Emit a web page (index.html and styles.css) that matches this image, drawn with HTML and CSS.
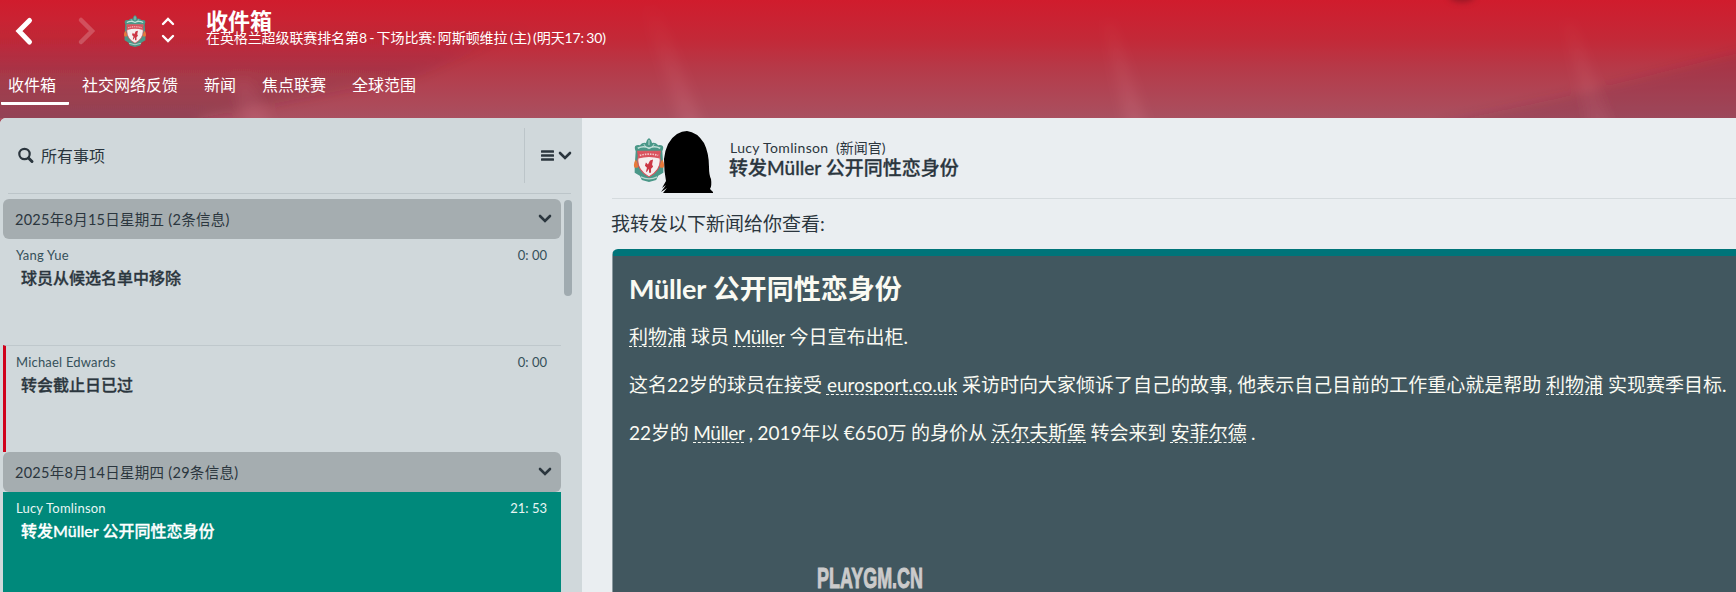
FILE: index.html
```html
<!DOCTYPE html>
<html lang="zh-CN">
<head>
    <meta charset="UTF-8">
    <meta name="viewport" content="width=device-width, initial-scale=1.0">
    <title>收件箱</title>
    <link rel="stylesheet" href="styles.css">
</head>
<body>
    <!-- Shared icons -->
    <svg class="sprite" width="0" height="0">
        <symbol id="crest" viewBox="0 0 30 43">
            <path d="M1 27 L2 13 Q-1 6 6 7 Q9 4 12 5 Q12 2 15 0 Q18 2 18 5 Q21 4 24 7 Q31 6 28 13 L29 27 L29 34 L24 37 L22 41 L15 43 L8 41 L6 37 L1 34 Z" fill="#4a9788"/>
            <path d="M4 10 Q10 7 15 10 Q20 7 26 10" fill="none" stroke="#c3e0d9" stroke-width="1.5"/>
            <path d="M15 2 V7 M10 6 L12 9 M20 6 L18 9" stroke="#d5eae5" stroke-width="0.8"/>
            <path d="M7 38 Q15 42 23 38" fill="none" stroke="#b9dad2" stroke-width="1.2"/>
            <path d="M1 29 Q-1 26 2 21 Q5 25 4 29 Z M29 29 Q31 26 28 21 Q25 25 26 29 Z" fill="#e8793a"/>
            <path d="M4 13 H26 Q25 17 26 22 Q26 32 15 38 Q4 32 4 22 Q5 17 4 13 Z" fill="#f5eeee" stroke="#d8505a" stroke-width="1"/>
            <path d="M4 13 H26 L25.500 20 Q15 17 4.500 20 Z" fill="#d9535e"/>
            <path d="M6 17 Q15 14.500 24 17" fill="none" stroke="#f3c5c8" stroke-width="1.600" stroke-dasharray="1.500 1"/>
            <path d="M12 24 L14 26 L16 22 L19 21 L18 26 L19 28 L17 30 L17 34 L15 34 L15 30 L13 33 L12 33 L13 29 L11 27 Z" fill="#cc3644"/>
        </symbol>
        <symbol id="chevron" viewBox="0 0 14 10">
            <path d="M2 2 L7 7 L12 2" fill="none" stroke="currentColor" stroke-width="2.600" stroke-linecap="round"/>
        </symbol>
    </svg>

    <header class="top-bar">
        <svg class="scenery" viewBox="0 0 1736 118" preserveAspectRatio="none">
            <defs>
                <filter id="soft"><feGaussianBlur stdDeviation="6"/></filter>
                <linearGradient id="ray" x1="0" y1="0" x2="0" y2="1">
                    <stop offset="0" stop-color="#ff9fb0" stop-opacity="0"/>
                    <stop offset="1" stop-color="#ff9fb0" stop-opacity="0.140"/>
                </linearGradient>
                <linearGradient id="shade" x1="0" y1="0" x2="0" y2="1">
                    <stop offset="0.200" stop-color="#5a2038" stop-opacity="0"/>
                    <stop offset="1" stop-color="#5a2038" stop-opacity="0.320"/>
                </linearGradient>
            </defs>
            <g filter="url(#soft)">
                <path d="M-20 0 H600 L420 75 L200 118 V130 H-20 Z" fill="url(#shade)"/>
                <path d="M640 0 L656 0 L706 134 L684 134 Z M1102 20 H1114 L1150 134 H1128 Z M1562 20 H1574 L1614 134 H1592 Z M232 80 L250 80 L276 134 H248 Z" fill="url(#ray)"/>
                <path d="M1440 124 L1560 98 L1750 50 V134 H1440 Z" fill="#6a2745" fill-opacity="0.200"/>
            </g>
            <ellipse class="spot" cx="1462" cy="-5" rx="13" ry="7"/>
        </svg>
        <div class="title-row">
            <svg class="nav-arrow" width="20" height="30" viewBox="0 0 20 30"><path d="M15.500 4.500 L5 15 L15.500 26" fill="none" stroke="#fff" stroke-width="5" stroke-linecap="round"/></svg>
            <svg class="nav-arrow forward" width="20" height="30" viewBox="0 0 20 30"><path d="M4 4 L15 15 L4 26" fill="none" stroke="#fff" stroke-width="4.500" stroke-linecap="round"/></svg>
            <svg class="club" width="24" height="32" preserveAspectRatio="none"><use href="#crest"/></svg>
            <svg class="switcher" width="16" height="28" viewBox="0 0 16 28"><path d="M3 8 L8 3 L13 8 M3 20 L8 25 L13 20" fill="none" stroke="#fff" stroke-width="2.400" stroke-linecap="round"/></svg>
            <div class="headings">
                <h1>收件箱</h1>
                <p>在英格兰超级联赛排名第8 - 下场比赛: 阿斯顿维拉 (主) (明天17: 30)</p>
            </div>
        </div>
        <nav>
            <a class="active">收件箱</a>
            <a>社交网络反馈</a>
            <a>新闻</a>
            <a>焦点联赛</a>
            <a>全球范围</a>
        </nav>
    </header>

    <main>
        <aside class="inbox">
            <div class="filter">
                <svg width="17" height="17" viewBox="0 0 17 17"><circle cx="6.500" cy="7" r="5.200" fill="none" stroke="#2b363e" stroke-width="2.200"/><path d="M10.500 11 L14 14.500" stroke="#2b363e" stroke-width="3" stroke-linecap="round"/></svg>
                <span class="filter-name">所有事项</span>
                <div class="filter-menu">
                    <svg width="13" height="11" viewBox="0 0 13 11"><path d="M1 1.500 H12 M1 5.500 H12 M1 9.500 H12" stroke="#2b363e" stroke-width="2.600" stroke-linecap="round"/></svg>
                    <svg width="14" height="10"><use href="#chevron"/></svg>
                </div>
            </div>
            <div class="list">
                <div class="messages">
                    <div class="group"><span>2025年8月15日星期五 (2条信息)</span><svg width="14" height="10"><use href="#chevron"/></svg></div>
                    <div class="message">
                        <div class="from"><span>Yang Yue</span><span class="time">0: 00</span></div>
                        <div class="subject">球员从候选名单中移除</div>
                    </div>
                    <div class="message urgent">
                        <div class="from"><span>Michael Edwards</span><span class="time">0: 00</span></div>
                        <div class="subject">转会截止日已过</div>
                    </div>
                    <div class="group"><span>2025年8月14日星期四 (29条信息)</span><svg width="14" height="10"><use href="#chevron"/></svg></div>
                    <div class="message selected">
                        <div class="from"><span>Lucy Tomlinson</span><span class="time">21: 53</span></div>
                        <div class="subject">转发Müller 公开同性恋身份</div>
                    </div>
                </div>
                <div class="scrollbar"></div>
            </div>
        </aside>

        <section class="reader">
            <div class="sender">
                <svg class="sender-club" width="32" height="44"><use href="#crest"/></svg>
                <svg class="portrait" width="54" height="62" viewBox="0 0 54 62"><path d="M27 0 Q37 1 44 12 Q49 22 49 36 Q49 44 51 48 Q52 55 50 58 L53 61 V62 H3 L7 57 L1 61 L6 54 L2 57 L6 50 Q4 40 4 28 Q6 10 17 3 Q22 0 27 0 Z" fill="#000"/></svg>
                <div class="sender-text">
                    <div class="sender-name"><span>Lucy Tomlinson&nbsp;</span> (新闻官)</div>
                    <h2>转发Müller 公开同性恋身份</h2>
                </div>
            </div>
            <p class="intro">我转发以下新闻给你查看:</p>
            <article>
                <h3><span>Müller</span> 公开同性恋身份</h3>
                <p><a>利物浦</a> 球员 <a class="player">Müller</a> 今日宣布出柜.</p>
                <p>这名22岁的球员在接受 <a>eurosport.co.uk</a> 采访时向大家倾诉了自己的故事, 他表示自己目前的工作重心就是帮助 <a>利物浦</a> 实现赛季目标.</p>
                <p class="transfer">22岁的 <a class="player">Müller</a> , 2019年以 €650万 的身价从 <a>沃尔夫斯堡</a> 转会来到 <a>安菲尔德</a> .</p>
                <svg class="watermark" width="108" height="26"><text x="1" y="23" textLength="106" lengthAdjust="spacingAndGlyphs">PLAYGM.CN</text></svg>
            </article>
        </section>
    </main>
</body>
</html>
```

FILE: styles.css
```css
/* General Styles */
* {
    box-sizing: border-box;
}

body {
    font-family: Lato, 'Noto Sans CJK SC', sans-serif;
    margin: 0;
    height: 592px;
    overflow: hidden;
    display: flex;
    flex-direction: column;
    background-color: #a8505f;
    color: #2b363e;
}

h1, h2, h3, p {
    margin: 0;
}

svg {
    display: block;
    flex: none;
}

.sprite {
    position: absolute;
}

/* Header */
.top-bar {
    position: relative;
    height: 118px;
    flex: none;
    color: white;
    background: linear-gradient(#d01c2d, #c32938 34%, #b53b4a 60%, #a95060);
    overflow: hidden;
}

.scenery {
    position: absolute;
    top: 0;
    left: 0;
    width: 100%;
    height: 100%;
}

.spot {
    fill: #7a1622;
    fill-opacity: 0.7;
    filter: blur(3px);
}

.title-row {
    position: relative;
    display: flex;
    align-items: center;
    height: 62px;
    padding-left: 14px;
}

.forward {
    margin-left: 43px;
    opacity: 0.2;
}

.club {
    margin-left: 26px;
}

.switcher {
    margin-left: 13px;
    margin-top: -2px;
}

.headings {
    margin-left: 30px;
    height: 47px;
    white-space: nowrap;
}

h1 {
    font-size: 22px;
    line-height: 26px;
}

.headings p {
    font-size: 14px;
    line-height: 18px;
    margin-top: -5px;
    word-spacing: -1.2px;
    letter-spacing: -0.1px;
}

nav {
    position: relative;
    display: flex;
    gap: 10px;
    padding-left: 1px;
}

nav a {
    font-size: 16px;
    line-height: 24px;
    height: 43px;
    padding: 11px 8px 0;
}

nav a:first-child {
    padding-left: 7px;
    width: 68px;
    margin-right: -5px;
}

nav .active {
    border-bottom: 3px solid white;
    border-radius: 1px;
}

/* Inbox list */
main {
    flex: 1;
    min-height: 0;
    display: flex;
    background-color: #eaeef1;
    border-top-left-radius: 6px;
    overflow: hidden;
}

.inbox {
    width: 582px;
    flex: none;
    background-color: #d0d8db;
}

.filter {
    display: flex;
    align-items: center;
    height: 76px;
    margin: 0 11px 5px 8px;
    padding-left: 10px;
    border-bottom: 1px solid #bcc5c9;
    font-size: 16px;
}

.filter-name {
    flex: 1;
    margin: -2px 0 0 6px;
}

.filter-menu {
    display: flex;
    align-items: center;
    gap: 4px;
    height: 55px;
    width: 47px;
    padding-left: 16px;
    border-left: 1px solid #bcc5c9;
}

.list {
    display: flex;
    gap: 3px;
    padding-left: 3px;
}

.messages {
    width: 558px;
}

.group {
    display: flex;
    justify-content: space-between;
    align-items: center;
    height: 40px;
    padding: 0 9px 0 12px;
    border-radius: 6px;
    background-color: #a5adb0;
    font-size: 14.5px;
    letter-spacing: 0.27px;
}

.group span {
    margin-top: -2px;
}

.message {
    height: 106px;
    padding: 7px 14px 0 13px;
}

.message.urgent {
    height: 107px;
    border-top: 1px solid #bfc8cc;
    border-left: 3px solid #d0021b;
    padding-left: 10px;
}

.message.selected {
    background-color: #00897b;
    color: white;
}

.from {
    display: flex;
    justify-content: space-between;
    font-size: 13px;
    line-height: 18px;
    letter-spacing: 0.2px;
    color: #35505a;
}

.time {
    letter-spacing: 0;
}

.selected .from {
    color: #e8f6f4;
}

.subject {
    font-size: 16px;
    font-weight: 500;
    line-height: 24px;
    margin: 2px 0 0 5px;
    -webkit-text-stroke: 0.3px;
}

.scrollbar {
    width: 8px;
    height: 96px;
    margin-top: 1px;
    border-radius: 4px;
    background-color: #a0abb0;
}

/* Reading pane */
.reader {
    flex: 1;
    min-width: 0;
    padding-left: 30px;
    display: flex;
    flex-direction: column;
}

.sender {
    display: flex;
    height: 81px;
    flex: none;
    padding-left: 21px;
    border-bottom: 1px solid #d5dbde;
}

.sender-club {
    margin-top: 20px;
}

.portrait {
    margin: 13px 0 0 -5px;
}

.sender-text {
    margin: 20px 0 0 16px;
}

.sender-name {
    font-size: 14px;
    line-height: 20px;
}

.sender-name span {
    letter-spacing: 0.35px;
}

h2 {
    font-size: 19px;
    font-weight: 500;
    line-height: 24px;
    -webkit-text-stroke: 0.3px;
    margin: -2px 0 0 -1px;
}

.intro {
    font-size: 19px;
    line-height: 28px;
    margin: 11px 0 11px -1px;
}

article {
    position: relative;
    flex: 1;
    margin-right: -10px;
    padding: 16px 0 0 16px;
    border-top: 7px solid #007479;
    border-left: 1px solid #8a999f;
    border-radius: 6px 0 0 0;
    background-color: #41575f;
    color: #fafaf2;
    white-space: nowrap;
}

h3 {
    font-size: 27px;
    line-height: 34px;
    margin-bottom: 7px;
}

h3 span {
    letter-spacing: -0.2px;
}

article p {
    font-size: 19px;
    line-height: 48px;
}

article a {
    text-decoration: underline dashed 1px;
    text-decoration-skip-ink: none;
    text-underline-offset: 2px;
}

article .player {
    letter-spacing: -0.5px;
}

.transfer {
    letter-spacing: -0.06px;
    word-spacing: -0.3px;
}

.watermark {
    position: absolute;
    left: 203px;
    top: 309px;
    font-family: 'Liberation Sans', sans-serif;
    font-weight: bold;
    font-size: 29px;
    fill: #cbcbcb;
    stroke: #cbcbcb;
    stroke-width: 1px;
}
```
